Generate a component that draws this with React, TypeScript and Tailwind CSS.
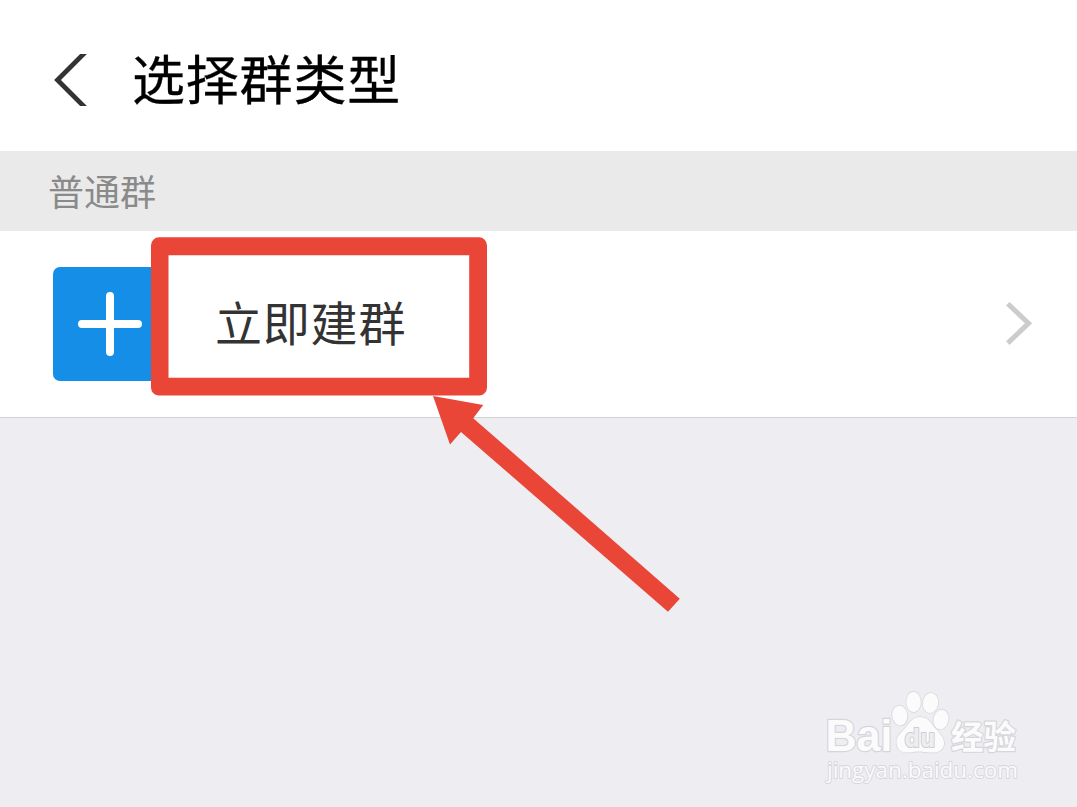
interface RowProps {
  label: string;
}

function Header({ title }: { title: string }) {
  return (
    <header className="flex h-[151px] items-center bg-white pl-[54px]">
      <button aria-label="返回" className="mt-[9px] h-[52px] w-[34px]">
        <svg width="34" height="52" viewBox="0 0 34 52" fill="none">
          <path d="M34 -4.5 3.5 26 34 56.5" stroke="#333336" strokeWidth="4.8" />
        </svg>
      </button>
      <h1 className="mt-[3px] ml-[44px] text-[53px] leading-[54px] font-normal tracking-[0.8px] text-black [-webkit-text-stroke:0.3px_black]">
        {title}
      </h1>
    </header>
  );
}

function GroupRow({ label }: RowProps) {
  return (
    <a
      href="#"
      className="flex h-[187px] items-center border-b border-[#d3d3d6] bg-white pr-[45px] pl-[53px]"
    >
      <div className="flex h-[114px] w-[114px] items-center justify-center rounded-[7px] bg-[#158ee8]">
        <svg width="64" height="64" viewBox="0 0 64 64" fill="none">
          <path d="M32 4v56M4 32h56" stroke="white" strokeWidth="8" strokeLinecap="round" />
        </svg>
      </div>
      <span className="mb-[7px] ml-12 flex-1 text-[47px] leading-[48px] tracking-[0.8px] text-[#333333]">
        {label}
      </span>
      <svg width="26" height="44" viewBox="0 0 26 44" fill="none">
        <path d="M1.8 1.7 22.5 21.3 1.8 41.1" stroke="#cccccc" strokeWidth="5" />
      </svg>
    </a>
  );
}

// Red frame and arrow lying over the row
function Callout() {
  return (
    <svg
      className="pointer-events-none absolute top-0 left-0"
      width="1077"
      height="807"
      viewBox="0 0 1077 807"
      fill="#e94638"
    >
      <path
        fillRule="evenodd"
        d="M159 237.3H479a8 8 0 0 1 8 8V387.6a8 8 0 0 1 -8 8H159a8 8 0 0 1 -8 -8V245.3a8 8 0 0 1 8 -8ZM168.5 255.2V377.7H469.2V255.2Z"
      />
      <path d="M433 396 483.2 405 473.2 418.2 679.8 598.7 668 611.7 461 432 450 444.5Z" />
    </svg>
  );
}

function Watermark() {
  return (
    <svg
      className="pointer-events-none absolute top-[680px] left-[810px]"
      width="230"
      height="115"
      viewBox="0 0 230 115"
      fill="#fbfbfc"
      stroke="#d6d6da"
      strokeWidth="1.4"
      strokeLinejoin="round"
      style={{ paintOrder: "stroke" }}
    >
      <text
        x="15.5"
        y="70.5"
        fontSize="44"
        fontWeight="700"
        fontFamily="Liberation Sans, sans-serif"
        textLength="67"
        lengthAdjust="spacingAndGlyphs"
        strokeWidth="2.4"
      >
        Bai
      </text>
      <ellipse cx="89.8" cy="35.5" rx="7.5" ry="10" transform="rotate(-8 90 35.5)" />
      <ellipse cx="103.5" cy="22" rx="7.3" ry="10.2" />
      <ellipse cx="120.5" cy="23" rx="7.8" ry="10" transform="rotate(8 120.5 23)" />
      <ellipse cx="131" cy="39.5" rx="7.5" ry="9.8" transform="rotate(12 131 39.5)" />
      <path d="M110 37C103 37 100 42 96 47C91 53 86 56 86.5 63C87 70 92 73 98 72.5C103 72 106 71.5 110 71.5C114 71.5 118 73 124 72.5C131 72 134.5 68 134 62C133.5 56 128 52 124 47C120 41 117 37 110 37Z" />
      <text
        x="94.5"
        y="66.5"
        fontSize="24"
        fontWeight="700"
        fontFamily="DejaVu Sans, sans-serif"
        textLength="31"
        lengthAdjust="spacingAndGlyphs"
        fill="#ededf0"
        stroke="#cdcdd2"
        strokeWidth="2"
      >
        du
      </text>
      <text
        x="141"
        y="68.5"
        fontSize="33"
        fontWeight="700"
        fontFamily="Noto Sans CJK SC, sans-serif"
        textLength="65"
        lengthAdjust="spacingAndGlyphs"
        strokeWidth="2.4"
      >
        经验
      </text>
      <text
        x="17"
        y="97.5"
        fontSize="22.5"
        fontFamily="Open Sans, sans-serif"
        textLength="191"
        lengthAdjust="spacingAndGlyphs"
        strokeWidth="1.8"
      >
        jingyan.baidu.com
      </text>
    </svg>
  );
}

export default function App() {
  return (
    <main className="relative h-[807px] w-[1077px] overflow-hidden bg-[#eeedf2] font-['Noto_Sans_CJK_SC',sans-serif]">
      <Header title="选择群类型" />
      <h2 className="flex h-20 items-center bg-[#eaeaea] pb-[3px] pl-12 text-[36px] leading-9 font-normal text-[#8a8a8a]">
        普通群
      </h2>
      <GroupRow label="立即建群" />
      <Callout />
      <Watermark />
    </main>
  );
}
